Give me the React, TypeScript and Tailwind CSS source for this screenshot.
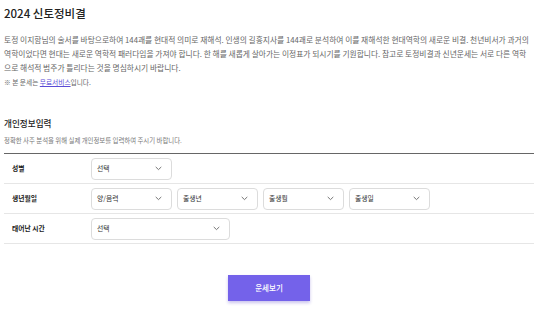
import React from "react";

const font = { fontFamily: '"Noto Sans CJK KR", "Noto Sans", sans-serif' };

function Chevron() {
  return (
    <svg width="7" height="5" viewBox="0 0 7 5" className="shrink-0">
      <path d="M1 1.2 L3.5 3.6 L6 1.2" fill="none" stroke="#666" strokeWidth="0.9" strokeLinecap="round" strokeLinejoin="round" />
    </svg>
  );
}

function Select({ label, w }: { label: string; w: string }) {
  return (
    <div className={`${w} h-[22px] flex items-center justify-between rounded-[4px] border border-[#dcdcdc] bg-white pl-[5px] pr-[9px] text-[6.8px] text-[#333]`}>
      <span>{label}</span>
      <Chevron />
    </div>
  );
}

function Row({ label, children }: { label: string; children: React.ReactNode }) {
  return (
    <div className="flex h-[30px] items-center border-b border-[#e6e6e6]">
      <div className="w-[87px] pl-[8px] text-[6.8px] font-semibold text-[#222]">{label}</div>
      <div className="flex items-center gap-[5px]">{children}</div>
    </div>
  );
}

export default function App() {
  return (
    <div className="w-[538px] h-[311px] bg-white overflow-hidden" style={font}>
      <div className="pl-[4px] pr-[4px] pt-[4px]">
        <h1 className="text-[11.5px] leading-[18px] font-medium text-[#222]">2024 신토정비결</h1>
        <p className="mt-[11px] pr-[4px] text-[7.75px] leading-[14px] text-[#666]">
          토정 이지함님의 술서를 바탕으로하여 144괘를 현대적 의미로 재해석. 인생의 길흉지사를 144괘로 분석하여 이를 재해석한 현대역학의 새로운 비결. 천년비서가 과거의 역학이었다면 현대는 새로운 역학적 패러다임을 가져야 합니다. 한 해를 새롭게 살아가는 이정표가 되시기를 기원합니다. 참고로 토정비결과 신년운세는 서로 다른 역학으로 해석적 범주가 틀리다는 것을 명심하시기 바랍니다.
        </p>
        <p className="text-[6.7px] leading-[14px] text-[#666]">
          ※ 본 운세는 <span className="text-[#5a4bd6] underline">무료서비스</span>입니다.
        </p>
        <h2 className="mt-[27px] text-[8.6px] leading-[14px] font-medium text-[#222]">개인정보입력</h2>
        <p className="mt-[5px] text-[6.4px] leading-[12px] text-[#777]">
          정확한 사주 분석을 위해 실제 개인정보를 입력하여 주시기 바랍니다.
        </p>
        <div className="mt-[6px] border-t border-[#666]">
          <Row label="성별">
            <Select label="선택" w="w-[81px]" />
          </Row>
          <Row label="생년월일">
            <Select label="양/음력" w="w-[81px]" />
            <Select label="출생년" w="w-[81px]" />
            <Select label="출생월" w="w-[81px]" />
            <Select label="출생일" w="w-[81px]" />
          </Row>
          <Row label="태어난 시간">
            <Select label="선택" w="w-[139px]" />
          </Row>
        </div>
        <div className="mt-[31px] flex justify-center">
          <button className="w-[82px] h-[26px] bg-[#7462ea] text-white text-[7.5px] font-medium shadow-[0_2px_3px_rgba(80,60,200,0.3)]">
            운세보기
          </button>
        </div>
      </div>
    </div>
  );
}
